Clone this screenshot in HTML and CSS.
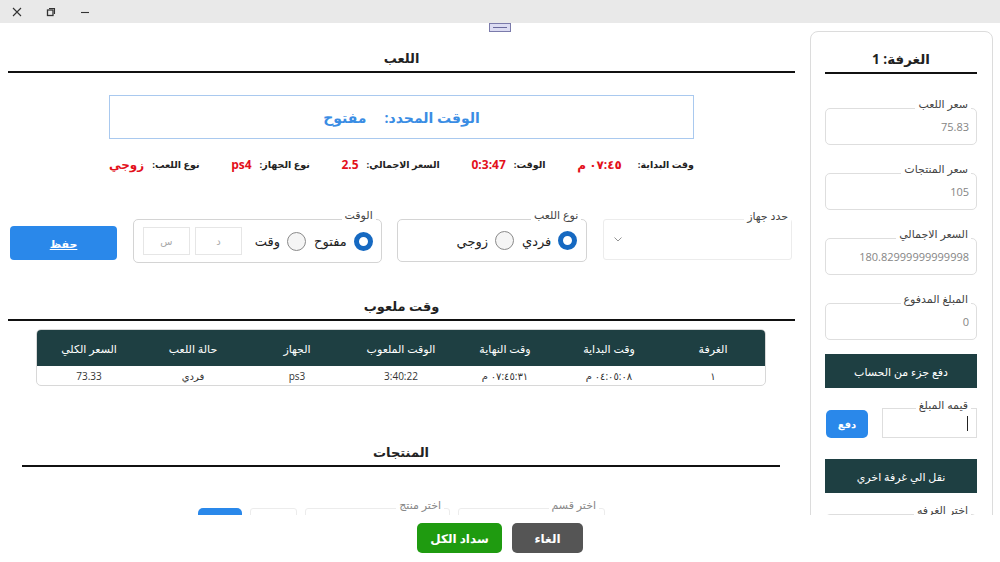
FILE: index.html
```html
<!DOCTYPE html>
<html lang="ar" dir="rtl">
<head>
<meta charset="utf-8">
<title>الغرفة</title>
<link rel="stylesheet" href="styles.css">
</head>
<body>
<div class="titlebar">
  <span class="wbtn"><svg width="10" height="10" viewBox="0 0 10 10"><path d="M1 1L9 9M9 1L1 9" stroke="#333" stroke-width="1.1" fill="none"/></svg></span>
  <span class="wbtn"><svg width="10" height="10" viewBox="0 0 10 10"><path d="M3 1.5H8.5V7" stroke="#333" stroke-width="1.1" fill="none"/><rect x="1.5" y="3" width="5.5" height="5.5" stroke="#333" stroke-width="1.3" fill="none"/></svg></span>
  <span class="wbtn"><svg width="10" height="10" viewBox="0 0 10 10"><path d="M1 5.5H9" stroke="#333" stroke-width="1.1" fill="none"/></svg></span>
</div>
<div class="handle"></div>

<div class="content">
  <aside class="panel">
    <h2 class="ptitle">الغرفة: 1</h2>
    <div class="pfield first"><span class="flabel">سعر اللعب</span><span class="pval">75.83</span></div>
    <div class="pfield"><span class="flabel">سعر المنتجات</span><span class="pval">105</span></div>
    <div class="pfield"><span class="flabel">السعر الاجمالي</span><span class="pval">180.82999999999998</span></div>
    <div class="pfield"><span class="flabel">المبلغ المدفوع</span><span class="pval">0</span></div>
    <div class="dark-btn">دفع جزء من الحساب</div>
    <div class="pay-row">
      <div class="pay-input"><span class="flabel lbl-dark">قيمه المبلغ</span><span class="caret"></span></div>
      <button class="pay-btn">دفع</button>
    </div>
    <div class="dark-btn second">نقل الي غرفة اخري</div>
    <div class="pfield room"><span class="flabel lbl-dark">اختر الغرفه</span></div>
  </aside>

  <main class="main">
    <h2 class="sec-title">اللعب</h2>
    <div class="timebox"><span>الوقت المحدد:</span><span>مفتوح</span></div>
    <div class="info">
      <div class="info-item"><span class="il">وقت البداية:</span><span class="iv wide">٠٧:٤٥ م</span></div>
      <div class="info-item"><span class="il">الوقت:</span><span class="iv">0:3:47</span></div>
      <div class="info-item"><span class="il">السعر الاجمالي:</span><span class="iv">2.5</span></div>
      <div class="info-item"><span class="il">نوع الجهاز:</span><span class="iv">ps4</span></div>
      <div class="info-item"><span class="il">نوع اللعب:</span><span class="iv">زوجي</span></div>
    </div>

    <div class="form-row">
      <div class="field select-field"><span class="flabel lbl-dark">حدد جهاز</span><svg class="chev" width="8" height="5" viewBox="0 0 8 5"><path d="M0.5 0.5L4 4L7.5 0.5" stroke="#888" stroke-width="0.9" fill="none"/></svg></div>
      <div class="field kind-field"><span class="flabel lbl-dark">نوع اللعب</span>
        <span class="radio on"></span><span class="rtext">فردي</span>
        <span class="radio"></span><span class="rtext">زوجي</span>
      </div>
      <div class="field time-field"><span class="flabel lbl-dark">الوقت</span>
        <span class="radio on"></span><span class="rtext">مفتوح</span>
        <span class="radio"></span><span class="rtext">وقت</span>
        <span class="tinput">د</span>
        <span class="tinput">س</span>
      </div>
      <button class="btn-save">حفظ</button>
    </div>

    <h2 class="sec-title sec2">وقت ملعوب</h2>
    <div class="table">
      <div class="thead">
        <span>الغرفة</span><span>وقت البداية</span><span>وقت النهاية</span><span>الوقت الملعوب</span><span>الجهاز</span><span>حالة اللعب</span><span>السعر الكلي</span>
      </div>
      <div class="trow">
        <span>١</span><span>٠٤:٠٥:٠٨ م</span><span>٠٧:٤٥:٣١ م</span><span>3:40:22</span><span>ps3</span><span>فردي</span><span>73.33</span>
      </div>
    </div>

    <h2 class="sec-title sec3">المنتجات</h2>
    <div class="prod-row">
      <div class="field psel1"><span class="flabel">اختر قسم</span></div>
      <div class="field psel2"><span class="flabel">اختر منتج</span></div>
      <div class="field pqty"></div>
      <button class="padd"></button>
    </div>
  </main>
</div>

<footer class="footer">
  <button class="fbtn gray">الغاء</button>
  <button class="fbtn green">سداد الكل</button>
</footer>
</body>
</html>
```

FILE: styles.css
```css
* { box-sizing: border-box; }
html, body { margin: 0; padding: 0; }
body {
  width: 1000px;
  height: 562px;
  overflow: hidden;
  background: #fff;
  font-family: "Open Sans", "DejaVu Sans", sans-serif;
  color: #222;
  position: relative;
}
button { font-family: inherit; border: none; padding: 0; cursor: pointer; }

.titlebar {
  direction: ltr;
  height: 23px;
  background: #e9e9e9;
  display: flex;
  align-items: center;
}
.wbtn {
  width: 34px;
  height: 23px;
  display: flex;
  align-items: center;
  justify-content: center;
}
.handle {
  position: absolute;
  left: 489px;
  top: 23px;
  width: 22px;
  height: 9px;
  border: 1px solid #7b7bab;
  background: #dcdcf2;
}
.handle::after {
  content: "";
  position: absolute;
  left: 3px;
  right: 3px;
  top: 3px;
  height: 1px;
  background: #6a6a9c;
}

.content {
  height: 492px;
  overflow: hidden;
  display: flex;
  align-items: flex-start;
}

/* right panel */
.panel {
  flex: none;
  width: 183px;
  height: 530px;
  margin-right: 7px;
  margin-top: 8px;
  border: 1px solid #dcdcdc;
  border-radius: 8px;
  padding: 0 15px 0 14px;
}
.ptitle {
  margin: 17px 0 0;
  font-size: 13.5px;
  font-weight: bold;
  line-height: 20px;
  text-align: center;
  padding-bottom: 3px;
  border-bottom: 2px solid #111;
}
.flabel {
  position: absolute;
  top: -11px;
  right: 5px;
  background: #fff;
  padding: 0 3px;
  font-size: 11px;
  line-height: 12px;
  color: #888;
  white-space: nowrap;
}
.lbl-dark { color: #444; }
.pfield {
  position: relative;
  height: 37px;
  border: 1px solid #dedede;
  border-radius: 5px;
  margin-top: 28px;
  display: flex;
  align-items: center;
  padding: 0 7px;
  font-size: 11px;
  color: #858585;
}
.pfield .flabel { color: #444; }
.pfield.first { margin-top: 34px; }
.pfield.room { margin-top: 21px; }
.dark-btn {
  height: 34px;
  margin-top: 14px;
  background: #1e3f42;
  color: #fff;
  font-size: 11px;
  display: flex;
  align-items: center;
  justify-content: center;
}
.dark-btn.second { margin-top: 21px; }
.pay-row {
  margin-top: 20px;
  display: flex;
  justify-content: space-between;
  align-items: flex-end;
}
.pay-input {
  position: relative;
  width: 95px;
  height: 30px;
  border: 1px solid #dedede;
  display: flex;
  align-items: center;
  padding: 0 8px;
}
.pay-input .flabel { top: -10px; }
.caret {
  width: 1px;
  height: 15px;
  background: #222;
}
.pay-btn {
  width: 42px;
  height: 28px;
  margin-left: 1px;
  background: #2a88ea;
  color: #fff;
  font-size: 10px;
  font-weight: bold;
  border-radius: 5px;
}

/* main */
.main {
  flex: none;
  width: 787px;
  margin-right: 15px;
}
.sec-title {
  margin: 25px 0 0;
  font-size: 13px;
  font-weight: bold;
  line-height: 20px;
  text-align: center;
  padding-bottom: 3px;
  border-bottom: 2px solid #111;
}
.sec2 { margin-top: 33px; }
.sec3 { margin: 56px 15px 0 14px; }

.timebox {
  width: 585px;
  height: 44px;
  margin: 22px auto 0;
  border: 1px solid #a9c9ef;
  display: flex;
  align-items: center;
  justify-content: center;
  gap: 18px;
  color: #3a8de4;
  font-weight: bold;
  font-size: 14px;
}
.info {
  width: 585px;
  margin: 18px auto 0;
  display: flex;
  justify-content: space-between;
  align-items: center;
  line-height: 16px;
}
.info-item { display: flex; align-items: center; white-space: nowrap; }
.il { font-size: 9.5px; font-weight: bold; color: #222; }
.iv { font-size: 12px; font-weight: bold; color: #e3101b; margin-right: 8px; }
.iv.wide { margin-right: 16px; }

.form-row {
  margin-top: 46px;
  padding: 0 3px 0 2px;
  display: flex;
  justify-content: space-between;
  align-items: flex-start;
}
.field {
  position: relative;
  border: 1px solid #d4d4d4;
  border-radius: 5px;
  display: flex;
  align-items: center;
}
.select-field {
  width: 189px;
  height: 41px;
  border-color: #ececec;
  border-radius: 3px;
  justify-content: flex-end;
  padding-left: 10px;
}
.select-field .flabel { top: -10px; right: 0; }
.chev { display: block; }
.kind-field { width: 190px; height: 43px; padding-right: 9px; }
.time-field { width: 249px; height: 44px; padding-right: 8px; }
.radio {
  flex: none;
  width: 19px;
  height: 19px;
  border-radius: 50%;
  border: 1px solid #8a8a8a;
  background: #f5f5f5;
}
.radio.on {
  border: 5px solid #1669c1;
  background: #fff;
}
.rtext {
  font-size: 13px;
  color: #222;
  margin: 0 7px 0 8px;
  line-height: 18px;
}
.tinput {
  width: 47px;
  height: 28px;
  border: 1px solid #e6e6e6;
  display: flex;
  align-items: center;
  justify-content: center;
  font-size: 10px;
  color: #aaa;
  margin-right: 5px;
}
.time-field .rtext:nth-of-type(2) { margin-left: 10px; }
.btn-save {
  width: 107px;
  height: 34px;
  margin-top: 7px;
  background: #2a88ea;
  color: #fff;
  font-size: 11px;
  font-weight: bold;
  text-decoration: underline;
  border-radius: 4px;
}

.table {
  margin: 8px 29px 0 28px;
  border: 1px solid #d8d8d8;
  border-radius: 5px;
  overflow: hidden;
}
.thead, .trow {
  display: grid;
  grid-template-columns: repeat(7, 1fr);
  align-items: center;
  text-align: center;
}
.thead {
  height: 36px;
  background: #1e3f42;
  color: #fff;
  font-size: 11px;
}
.trow {
  height: 19px;
  font-size: 10px;
  color: #333;
}

.prod-row {
  margin-top: 41px;
  display: flex;
  justify-content: center;
  align-items: flex-start;
  gap: 8px;
}
.prod-row .field { height: 36px; border-color: #ececec; border-radius: 3px; }
.prod-row .flabel { top: -10px; }
.psel1 { width: 147px; }
.psel2 { width: 145px; }
.pqty { width: 47px; }
.padd {
  width: 44px;
  height: 30px;
  background: #2a88ea;
  border-radius: 5px;
}

.footer {
  height: 47px;
  padding-top: 8px;
  display: flex;
  justify-content: center;
  gap: 10px;
}
.fbtn {
  height: 30px;
  border-radius: 5px;
  color: #fff;
  font-size: 12px;
  font-weight: bold;
}
.fbtn.gray { width: 71px; background: #555; }
.fbtn.green { width: 85px; background: #1f9b10; }
```
